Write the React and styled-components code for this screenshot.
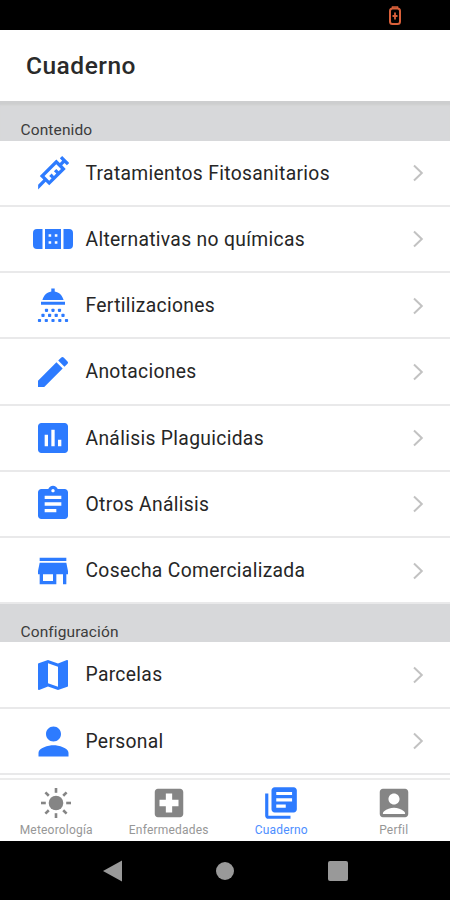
import React from 'react'
import styled, { createGlobalStyle } from 'styled-components'
import {
  MdAccountBox,
  MdAssessment,
  MdAssignment,
  MdEdit,
  MdLibraryBooks,
  MdLocalHospital,
  MdMap,
  MdPerson,
  MdStore,
} from 'react-icons/md'

const GlobalStyle = createGlobalStyle`
  * {
    box-sizing: border-box;
  }
  body {
    margin: 0;
    background: black;
    font-family: Roboto, sans-serif;
  }
`
const Screen = styled.div`
  display: flex;
  flex-direction: column;
  width: 450px;
  height: 900px;
  overflow: hidden;
  background: white;
`
const StatusBar = styled.div`
  display: flex;
  justify-content: flex-end;
  flex: none;
  height: 30px;
  padding: 6px 48px 0 0;
  background: black;
`
const Header = styled.header`
  flex: none;
  height: 70.5px;
  padding: 20px 26px 0;
  background: white;
`
const Title = styled.h1`
  margin: 0;
  font-size: 24.5px;
  line-height: 31px;
  font-weight: 500;
  letter-spacing: 0.5px;
  color: #2a2a2a;
`
const List = styled.main`
  flex: 1;
  min-height: 0;
  overflow: hidden;
`
const SectionTitle = styled.h2`
  height: ${props => props.$height}px;
  margin: 0;
  padding: ${props => props.$height - 20.2}px 20.5px 0;
  background: #d7d8da;
  box-shadow: ${props => (props.$shadow ? 'inset 0 5px 2px -1px #cdcecf' : 'none')};
  font-size: 15.5px;
  line-height: 20px;
  font-weight: 400;
  letter-spacing: 0.12px;
  color: #3c3c3c;
`
const Row = styled.div`
  display: flex;
  align-items: center;
  height: 66.25px;
  padding: 1.2px 26px 0 33px;
  border-bottom: 2px solid #e9e9ea;
`
const RowIcon = styled.div`
  display: flex;
  align-items: center;
  justify-content: center;
  width: 40px;
  height: 40px;
  margin-right: 12.5px;
  color: #2d7bff;
  svg {
    flex: none;
  }
`
const RowLabel = styled.span`
  flex: 1;
  font-size: 19.3px;
  letter-spacing: 0.32px;
  white-space: nowrap;
  color: #262626;
`
const TabBar = styled.nav`
  display: grid;
  grid-template-columns: repeat(4, 1fr);
  flex: none;
  height: 63px;
  border-top: 2px solid #ececec;
  background: white;
`
const Tab = styled.div`
  display: flex;
  flex-direction: column;
  align-items: center;
  padding-top: 4.5px;
  color: ${props => (props.$active ? '#2d7bff' : '#858585')};
  svg {
    flex: none;
  }
`
const TabLabel = styled.span`
  font-size: 12px;
  line-height: 16px;
  letter-spacing: 0.2px;
  opacity: 0.85;
`
const NavBar = styled.div`
  display: grid;
  grid-template-columns: repeat(3, 112.5px);
  justify-content: center;
  justify-items: center;
  flex: none;
  height: 59.5px;
  padding-top: 19px;
  background: black;
`

const BatteryIcon = () => (
  <svg width='14' height='20' viewBox='0 0 14 20' fill='none' stroke='#d9603a'>
    <path d='M4.5 2.2V1h5v1.2' strokeWidth='1.5' />
    <rect x='2' y='2.5' width='10' height='15.5' rx='2.5' strokeWidth='2' />
    <path d='M7 6.5v7M4.5 10h5' strokeWidth='1.8' />
  </svg>
)

const NeedleIcon = () => (
  <svg width='40' height='40' viewBox='0 0 24 24' fill='currentColor'>
    <path d='M11.15 15.18L9.73 13.77L11.15 12.35L12.56 13.77L13.97 12.35L12.56 10.94L13.97 9.53L15.39 10.94L16.8 9.53L13.97 6.7L6.9 13.77L9.73 16.6L11.15 15.18M3.08 19L6.2 15.89L4.08 13.77L13.97 3.87L16.1 6L17.5 4.58L16.1 3.16L17.5 1.75L21.75 6L20.34 7.4L18.92 6L17.5 7.4L19.63 9.53L9.73 19.42L7.61 17.3L3.08 21.84V19Z' />
  </svg>
)

const BandageIcon = () => (
  <svg width='40' height='40' viewBox='0 0 40 40' fill='currentColor'>
    <path d='M9.5 10v20H4a4 4 0 0 1-4-4V14a4 4 0 0 1 4-4zM30.5 10H36a4 4 0 0 1 4 4v12a4 4 0 0 1-4 4h-5.5z' />
    <path
      fillRule='evenodd'
      d='M12 10h16v20H12zM15.6 15.2v2.6h2.6v-2.6zM21.8 15.2v2.6h2.6v-2.6zM15.6 22.2v2.6h2.6v-2.6zM21.8 22.2v2.6h2.6v-2.6z'
    />
  </svg>
)

const drops = [
  [13.5, 24.3], [20, 24.3], [26.5, 24.3],
  [10, 29.4], [16.6, 29.4], [23.2, 29.4], [30, 29.4],
  [6.5, 34.5], [13.3, 34.5], [20, 34.5], [26.8, 34.5], [33.5, 34.5],
]

const ShowerIcon = () => (
  <svg width='40' height='40' viewBox='0 0 40 40' fill='currentColor'>
    <path d='M18.3 2.5h3.4v3c4.4.8 7.8 4 8.9 8.5H9.4C10.5 9.5 13.9 6.3 18.3 5.5zM8 15.7h24v3H8z' />
    {drops.map(([x, y]) => (
      <rect key={`${x}-${y}`} x={x - 1.6} y={y - 1.6} width='3.2' height='3.2' rx='0.8' />
    ))}
  </svg>
)

const SunIcon = () => (
  <svg width='38' height='38' viewBox='0 0 38 38' fill='currentColor'>
    <circle cx='19' cy='19' r='7.3' />
    {[0, 45, 90, 135, 180, 225, 270, 315].map(angle => (
      <rect key={angle} x='17.7' y='4' width='2.6' height='4.8' transform={`rotate(${angle} 19 19)`} />
    ))}
  </svg>
)

const Chevron = () => (
  <svg width='12' height='18' viewBox='0 0 12 18' fill='none' stroke='#c2c2c2' strokeWidth='2'>
    <path d='M2 1.5l7.8 7.5L2 16.5' />
  </svg>
)

const contenido = [
  { label: 'Tratamientos Fitosanitarios', icon: <NeedleIcon /> },
  { label: 'Alternativas no químicas', icon: <BandageIcon /> },
  { label: 'Fertilizaciones', icon: <ShowerIcon /> },
  { label: 'Anotaciones', icon: <MdEdit size={40} /> },
  { label: 'Análisis Plaguicidas', icon: <MdAssessment size={40} /> },
  { label: 'Otros Análisis', icon: <MdAssignment size={40} /> },
  { label: 'Cosecha Comercializada', icon: <MdStore size={40} /> },
]

const configuracion = [
  { label: 'Parcelas', icon: <MdMap size={40} /> },
  { label: 'Personal', icon: <MdPerson size={45} /> },
]

const tabs = [
  { label: 'Meteorología', icon: <SunIcon /> },
  { label: 'Enfermedades', icon: <MdLocalHospital size={38} /> },
  { label: 'Cuaderno', icon: <MdLibraryBooks size={38} />, active: true },
  { label: 'Perfil', icon: <MdAccountBox size={38} /> },
]

const Rows = ({ items }) =>
  items.map(item => (
    <Row key={item.label}>
      <RowIcon>{item.icon}</RowIcon>
      <RowLabel>{item.label}</RowLabel>
      <Chevron />
    </Row>
  ))

const App = () => {
  return (
    <>
      <GlobalStyle />
      <Screen>
        <StatusBar>
          <BatteryIcon />
        </StatusBar>
        <Header>
          <Title>Cuaderno</Title>
        </Header>
        <List>
          <SectionTitle $height={40} $shadow>Contenido</SectionTitle>
          <Rows items={contenido} />
          <SectionTitle $height={38}>Configuración</SectionTitle>
          <Rows items={configuracion} />
        </List>
        <TabBar>
          {tabs.map(tab => (
            <Tab key={tab.label} $active={tab.active}>
              {tab.icon}
              <TabLabel>{tab.label}</TabLabel>
            </Tab>
          ))}
        </TabBar>
        <NavBar>
          <svg width='20' height='22' viewBox='0 0 20 22' fill='#999'>
            <path d='M0 11L19 .5v21z' />
          </svg>
          <svg width='20' height='22' viewBox='0 0 20 22' fill='#999'>
            <circle cx='10' cy='11' r='9' />
          </svg>
          <svg width='20' height='22' viewBox='0 0 20 22' fill='#999'>
            <rect y='1' width='20' height='20' rx='2' />
          </svg>
        </NavBar>
      </Screen>
    </>
  )
}

export default App
